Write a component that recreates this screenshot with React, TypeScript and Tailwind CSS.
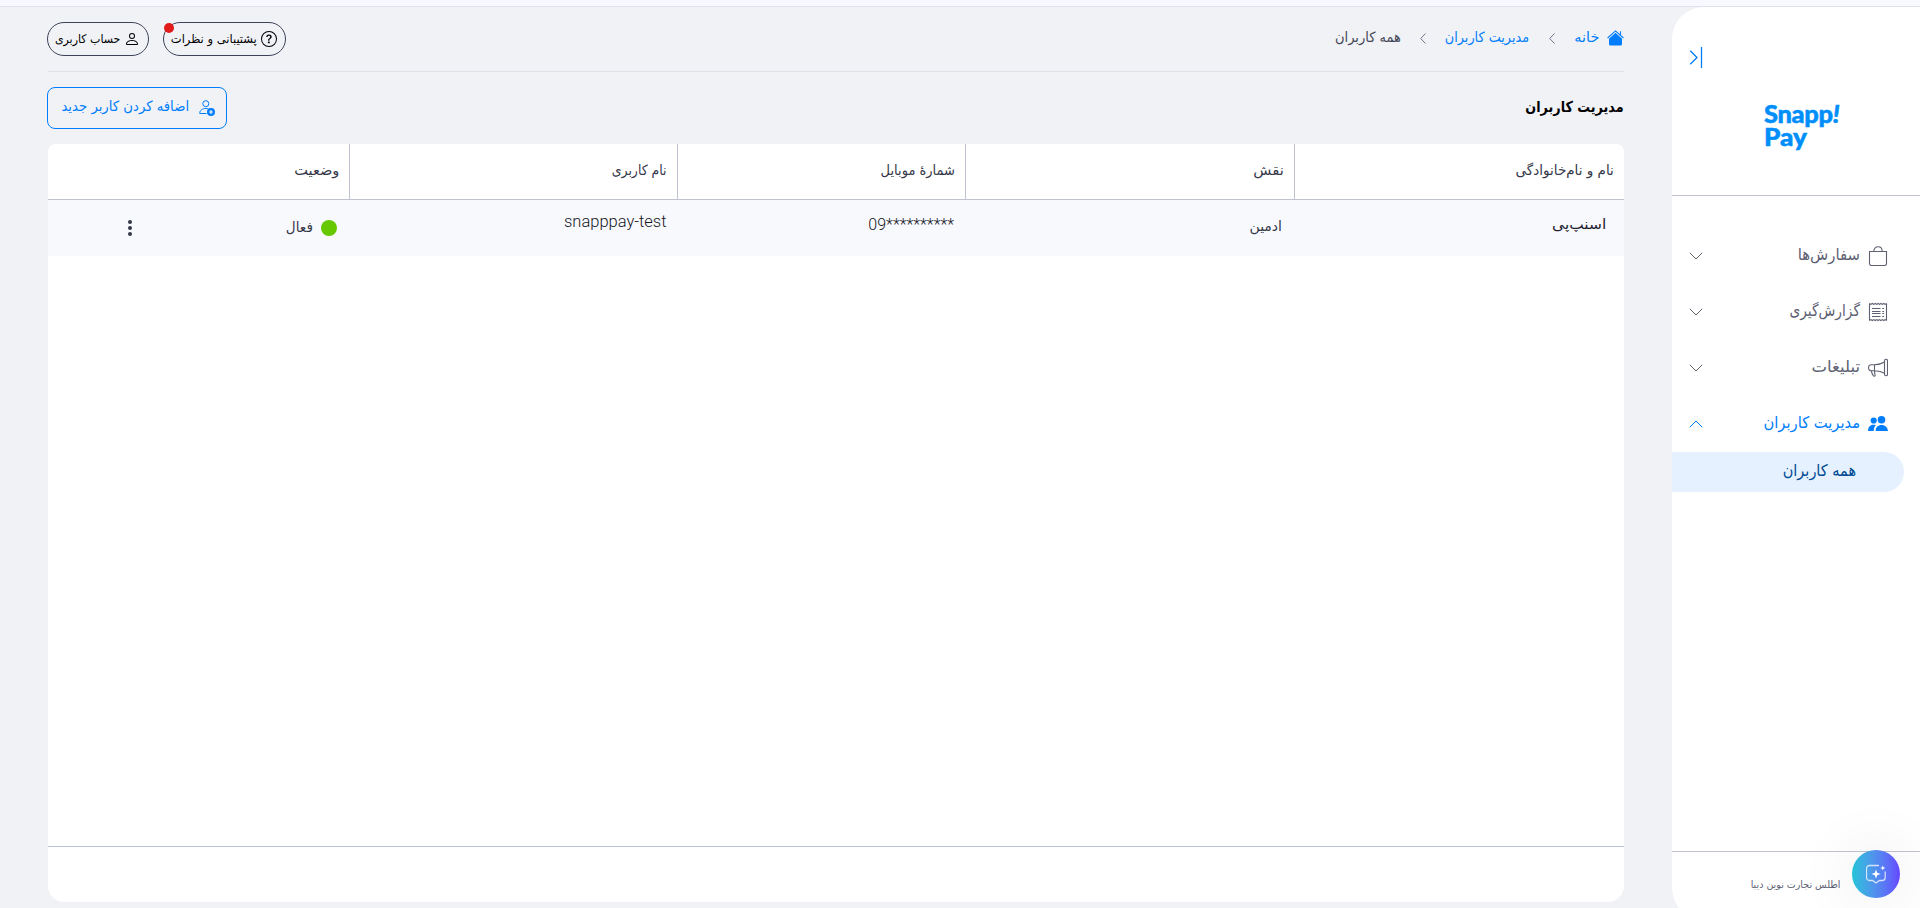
import type { ReactNode } from "react";
import { BsPerson, BsQuestionCircle } from "react-icons/bs";

/* Single-line label whose letter width can be tuned through a scale class. */
function Label({ children, className = "" }: { children: ReactNode; className?: string }) {
  return <span className={`inline-block origin-right whitespace-nowrap ${className}`}>{children}</span>;
}

function Chevron({ className }: { className: string }) {
  return (
    <svg className={className} viewBox="0 0 14 8" fill="none" stroke="currentColor" strokeWidth="1">
      <path d="M.8 .8 7 7 13.2 .8" />
    </svg>
  );
}

function Crumb() {
  return (
    <svg className="h-[11px] w-[6px] text-[#70768a]" viewBox="0 0 6 11" fill="none" stroke="currentColor">
      <path d="M5.5 .5 .7 5.5l4.8 5" />
    </svg>
  );
}

function BagIcon() {
  return (
    <svg className="size-5" viewBox="0 0 20 20" fill="none" stroke="currentColor" strokeWidth="1.1">
      <path d="M1.500 5.500h17v12a2 2 0 0 1-2 2h-13a2 2 0 0 1-2-2zM5.800 5.500C5.800 2.600 7.500.8 10 .8s4.200 1.800 4.200 4.700" />
    </svg>
  );
}

function ReportIcon() {
  return (
    <svg className="size-5" viewBox="0 0 20 20" fill="none" stroke="currentColor" strokeWidth="1.1">
      <path d="M1.500 1.500v17M18.500 1.500v17" />
      <path d="M1.500 1.500l1.420 .9 1.420-.9 1.420 .9 1.420-.9 1.420 .9L10 1.500l1.420 .9 1.420-.9 1.420 .9 1.420-.9 1.420 .9 1.400-.9M1.500 18.500l1.420-.9 1.420 .9 1.420-.9 1.420 .9 1.420-.9 1.400 .9 1.420-.9 1.420 .9 1.420-.9 1.420 .9 1.420-.9 1.400 .9" />
      <path d="M4 6.500h8.500M4 9.500h8.500M4 11.500h8.500M4 14.500h8.500M14.300 6.500H16M14.300 9.500H16M14.300 11.500H16M14.300 14.500H16" strokeWidth="1.200" />
    </svg>
  );
}

function HornIcon() {
  return (
    <svg className="size-5" viewBox="0 0 20 20" fill="none" stroke="currentColor" strokeWidth="1.1" strokeLinejoin="round">
      <path d="M16.500 2.700a1.500 1.500 0 0 1 3 0v13.600a1.500 1.500 0 0 1-3 0zM16.500 4C13.500 6 10 6.600 6.500 6.700v6c3.500.2 7 .8 10 2.600M6.500 6.700H3.200A2.500 2.500 0 0 0 .6 9.200v1a2.500 2.500 0 0 0 2.600 2.500h3.300M3.300 12.700c.3 2 .9 3.600 2 5 .5.800 1.900.600 1.800-.3-.4-1.500-.5-3-.6-4.700" />
    </svg>
  );
}

function PeopleIcon() {
  return (
    <svg className="size-5" viewBox="0 0 20 20" fill="currentColor">
      <circle cx="13.500" cy="5.700" r="3.800" />
      <circle cx="5.700" cy="6.500" r="3.100" />
      <path d="M7.600 17c0-3.700 2.500-6 5.900-6s6.400 2.300 6.400 6zM.1 17c0-3.900 1.900-6.200 5.400-6.200 1 0 1.700.1 2.500.5-1.600 1.300-2.200 3-2.200 5.700z" />
    </svg>
  );
}

function HomeIcon() {
  return (
    <svg className="h-4 w-[17px]" viewBox="0 0 17 16" fill="currentColor">
      <path d="M8.500 2.700 15 8.800V14a1.500 1.500 0 0 1-1.500 1.500h-10A1.500 1.500 0 0 1 2 14V8.800z" />
      <path d="M.6 8 8.500.9 16.400 8M13.500 1.300v3.500" fill="none" stroke="currentColor" strokeWidth="1.100" />
    </svg>
  );
}

function AddUserIcon() {
  return (
    <svg className="h-4 w-4" viewBox="0 0 16 16" fill="none" stroke="currentColor">
      <circle cx="6.800" cy="3.700" r="3" />
      <path d="M7.500 13.500H.7c0-3.300 2.500-5 6.300-5 1 0 1.800.1 2.500.3" />
      <circle cx="12" cy="12" r="4" fill="currentColor" stroke="none" />
      <path d="M12 10v4M10 12h4" stroke="#f1f2f6" strokeWidth="1.200" />
    </svg>
  );
}

function MenuRow({ icon, label, open, fit }: { icon: ReactNode; label: string; open?: boolean; fit: string }) {
  return (
    <div className={`flex h-14 items-center justify-between pr-[32px] pl-[17px] ${open ? "text-[#007dfa]" : "text-[#5d6172]"}`}>
      <div className="flex items-center gap-2">
        {icon}
        <Label className={`pb-[3px] ${fit}`}>{label}</Label>
      </div>
      <Chevron className={open ? "h-2 w-[14px] rotate-180" : "h-2 w-[14px]"} />
    </div>
  );
}

function Sidebar() {
  return (
    <aside className="flex h-[913px] w-[248px] shrink-0 flex-col rounded-l-[32px] bg-white">
      <header className="h-[189px] border-b border-[#bfc2d4] pt-[40px]">
        <div className="flex justify-end pl-[17px]">
          <svg className="h-[21px] w-[14px] text-[#007dfa]" viewBox="0 0 14 21" fill="none" stroke="currentColor" strokeWidth="1.300">
            <path d="M1.300 3.800 8 10.500l-6.700 6.700M12.500 0v21" />
          </svg>
        </div>
        <div dir="ltr" className="mt-[34px] ml-[92px] text-[24px] leading-[23px] font-black text-[#008efa] font-['Lato'] [-webkit-text-stroke:0.5px_#008efa]">
          <div className="h-[23px] w-fit origin-left scale-x-[1.06] tracking-[-0.3px]">Snapp<i>!</i></div>
          <div className="w-fit origin-left scale-x-[1.09]">Pay</div>
        </div>
      </header>
      <nav className="flex-1 pt-8 text-[16px]">
        <MenuRow icon={<BagIcon />} label="سفارش‌ها" fit="scale-x-[0.93]" />
        <MenuRow icon={<ReportIcon />} label="گزارش‌گیری" fit="scale-x-[0.86]" />
        <MenuRow icon={<HornIcon />} label="تبلیغات" fit="scale-x-[1.03]" />
        <MenuRow open icon={<PeopleIcon />} label="مدیریت کاربران" fit="scale-x-[0.92]" />
        <div className="mr-4 flex h-10 items-center rounded-r-full bg-[#e5f1fe] pr-12 text-[#004a94]">
          <Label className="scale-x-[0.905] pb-[3px]">همه کاربران</Label>
        </div>
      </nav>
      <footer className="flex h-[69px] border-t border-[#bfc2d4] pt-[25px] pr-[79px] text-[10px] text-[#5d6172]">
        <Label className="scale-x-[0.95]">اطلس تجارت نوین دیبا</Label>
      </footer>
    </aside>
  );
}

function TopBar() {
  return (
    <div className="flex h-[65px] items-start justify-between border-b border-[#dfe1e9]">
      <div className="flex h-[62px] items-center text-[14px] text-[#007dfa]">
        <HomeIcon />
        <span className="mr-2 w-[25px] pb-px"><Label className="scale-x-[1.03]">خانه</Label></span>
        <span className="mr-[19px] flex"><Crumb /></span>
        <span className="mr-5 w-[84px] pb-px"><Label className="scale-x-[0.915]">مدیریت کاربران</Label></span>
        <span className="mr-[19px] flex"><Crumb /></span>
        <span className="mr-[19px] pb-px text-[#424656]"><Label className="scale-x-[0.93]">همه کاربران</Label></span>
      </div>
      <div className="-ml-px flex gap-[14px] pt-[15px] text-[12px] text-black">
        <div className="relative flex h-[34px] w-[123px] items-center rounded-full border border-[#3d4258] pr-2">
          <BsQuestionCircle className="size-4 shrink-0" />
          <Label className="mr-1 scale-x-[0.957] pb-px">پشتیبانی و نظرات</Label>
          <span className="absolute top-0 left-0 size-[10px] rounded-full bg-[#e21b1b]" />
        </div>
        <div className="flex h-[34px] w-[102px] items-center rounded-full border border-[#3d4258] pr-2">
          <BsPerson className="size-4 shrink-0" />
          <Label className="mr-1 scale-x-[0.917] pb-px">حساب کاربری</Label>
        </div>
      </div>
    </div>
  );
}

const columns = [
  { title: "نام و نام‌خانوادگی", fit: "scale-x-[0.965]" },
  { title: "نقش", fit: "scale-x-[1.06]" },
  { title: "شمارهٔ موبایل", fit: "scale-x-[0.93]" },
  { title: "نام کاربری", fit: "scale-x-[0.89]" },
  { title: "وضعیت", fit: "scale-x-[1.04]" },
];

function UsersTable() {
  const cols = "grid grid-cols-[330px_329px_288px_328px_1fr]";
  return (
    <section className="mt-[15px] flex h-[758px] flex-col rounded-t-lg rounded-b-2xl bg-white text-[14px] text-[#353849]">
      <div className={`${cols} h-14 border-b border-[#bfc2d0]`}>
        {columns.map((c) => (
          <div key={c.title} className="flex items-center border-l border-[#bfc2d0] pr-[10px] last:border-l-0">
            <Label className={`pb-[2px] ${c.fit}`}>{c.title}</Label>
          </div>
        ))}
      </div>
      <div className={`${cols} h-14 bg-[#f8f9fd]`}>
        <div className="pt-[14px] pr-[18px] text-[#1f2130]"><Label className="scale-x-[1.1]">اسنپ‌پی</Label></div>
        <div className="pt-[16px] pr-[12px]"><Label>ادمین</Label></div>
        <div dir="ltr" className="pt-[13px] pr-[11px] text-right font-['Roboto'] text-[16px] font-light text-[#15161f]">09**********</div>
        <div dir="ltr" className="pt-[10px] pr-[11px] text-right font-['Roboto'] text-[16px] font-light text-[#15161f]"><Label className="scale-x-[1.03]">snapppay-test</Label></div>
        <div className="flex items-center justify-between pr-3 pl-[80px]">
          <div className="flex items-center gap-2">
            <span className="size-4 rounded-full bg-[#66c800]" />
            <Label className="scale-x-[0.97] pb-[2px]">فعال</Label>
          </div>
          <span className="flex flex-col gap-[2.500px]">
            <i className="size-[3.500px] rounded-full bg-[#353849]" />
            <i className="size-[3.500px] rounded-full bg-[#353849]" />
            <i className="size-[3.500px] rounded-full bg-[#353849]" />
          </span>
        </div>
      </div>
      <div className="flex-1" />
      <div className="h-[56px] border-t border-[#bcc2dd]" />
    </section>
  );
}

export default function App() {
  return (
    <div dir="rtl" className="relative h-[908px] w-[1920px] overflow-hidden bg-[#f1f2f6] font-['DejaVu_Sans',sans-serif]">
      <div className="h-[7px] border-b border-[#dfe1ec] bg-[#f8f9ff]" />
      <div className="flex">
        <Sidebar />
        <main className="mr-12 ml-12 min-w-0 flex-1">
          <TopBar />
          <div className="mt-[15px] -ml-px flex h-[42px] items-center justify-between">
            <h1 className="text-[15px] font-bold text-black"><Label className="scale-x-[0.85] pb-[2px]">مدیریت کاربران</Label></h1>
            <button className="flex h-[42px] w-[180px] items-center rounded-lg border border-[#007dfa] pr-[11px] text-[14px] text-[#007dfa]">
              <AddUserIcon />
              <Label className="mr-[10px] scale-x-[0.945] pb-[4px]">اضافه کردن کاربر جدید</Label>
            </button>
          </div>
          <UsersTable />
        </main>
      </div>
      <div className="absolute top-[850px] left-[1852px] flex size-12 items-center justify-center rounded-full bg-linear-to-r from-[#1fc4d8] to-[#6545ff] shadow-[0_0_60px_rgba(0,0,0,0.10)]">
        <svg className="size-5" viewBox="0 0 20 20" fill="none" stroke="white" strokeWidth="1.300" strokeLinecap="round">
          <path d="M12.500 1.500H3.500a3 3 0 0 0-3 3v9a3 3 0 0 0 3 3h3L10 19l3.500-2.500h2.700a3 3 0 0 0 3-3V8" opacity=".75" />
          <path d="m10 5.500 1.200 3.300 3.300 1.200-3.300 1.200L10 14.500l-1.200-3.300L5.500 10l3.300-1.200zM16.800 1.500l.7 1.800 1.800.7-1.800.7-.7 1.800-.7-1.800-1.800-.7 1.800-.7z" fill="white" stroke="none" />
        </svg>
      </div>
    </div>
  );
}
